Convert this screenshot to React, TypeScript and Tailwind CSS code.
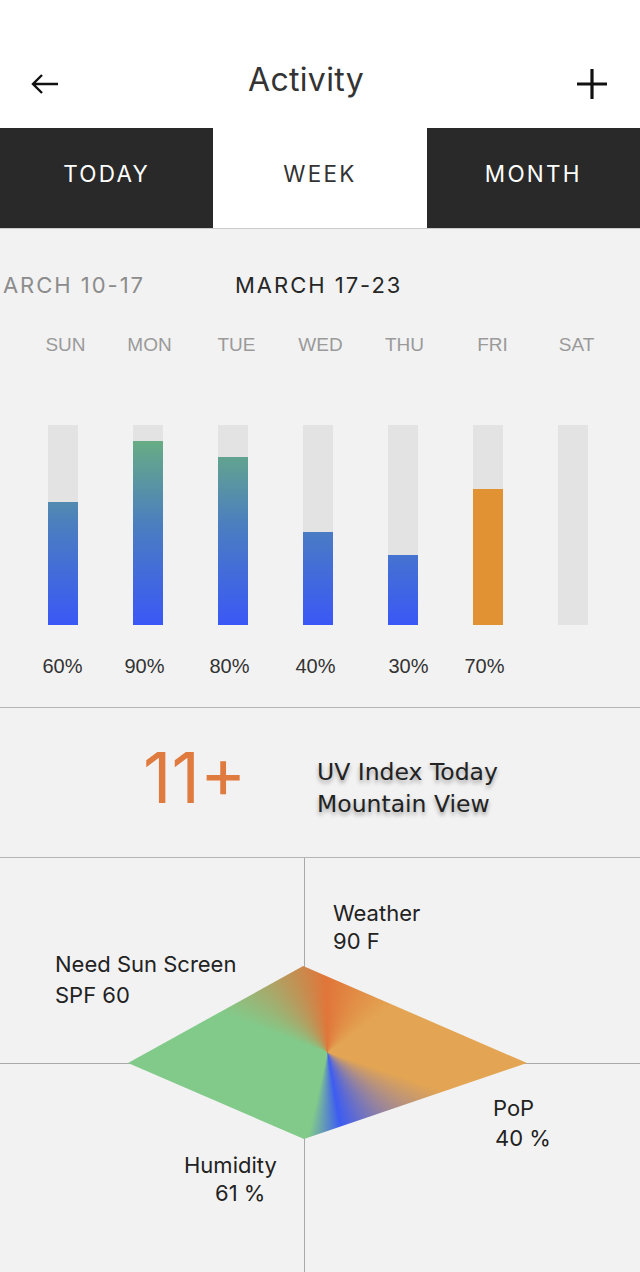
import React from "react";

const days = [
  { d: "SUN", fill: 123, pct: "60%", color: "grad", dl: "translate-x-[3px]", pl: "translate-x-[0px]" },
  { d: "MON", fill: 184, pct: "90%", color: "grad", dl: "translate-x-[2px]", pl: "-translate-x-[3px]" },
  { d: "TUE", fill: 168, pct: "80%", color: "grad", dl: "translate-x-[4px]", pl: "-translate-x-[3px]" },
  { d: "WED", fill: 93, pct: "40%", color: "grad", dl: "translate-x-[3px]", pl: "-translate-x-[2px]" },
  { d: "THU", fill: 70, pct: "30%", color: "grad", dl: "translate-x-[2px]", pl: "translate-x-[6px]" },
  { d: "FRI", fill: 136, pct: "70%", color: "orange", dl: "translate-x-[5px]", pl: "-translate-x-[3px]" },
  { d: "SAT", fill: 0, pct: "", color: "grad", dl: "translate-x-[4px]", pl: "translate-x-[0px]" },
];

function BackArrow() {
  return (
    <svg width="30" height="24" viewBox="0 0 30 24" fill="none">
      <path d="M28 12H3M12 3L3 12L12 21" stroke="#111" strokeWidth="2.4" strokeLinecap="butt" strokeLinejoin="miter" />
    </svg>
  );
}

function Plus() {
  return (
    <svg width="32" height="32" viewBox="0 0 32 32" fill="none">
      <path d="M16 1V31M1 16H31" stroke="#111" strokeWidth="3.2" />
    </svg>
  );
}

export default function App() {
  return (
    <div className="w-[640px] h-[1272px] overflow-hidden bg-[#f2f2f2] font-['Inter','Noto_Sans',sans-serif] text-[#222]">
      {/* Header */}
      <div className="h-[128px] bg-white pt-[56px]">
        <div className="flex h-[56px] items-center pl-[30px] pr-[32px]">
          <BackArrow />
          <div className="mb-[8px] flex-1 pr-[24px] text-center text-[32px] leading-none text-[#333] tracking-[0.01em]">
            Activity
          </div>
          <Plus />
        </div>
      </div>

      {/* Tabs */}
      <div className="grid h-[101px] grid-cols-3 border-b border-[#c9c9c9] text-[22.5px] tracking-[0.1em]">
        <div className="flex items-center justify-center bg-[#292929] pb-[8px] text-white">TODAY</div>
        <div className="flex items-center justify-center bg-white pb-[8px] text-[#333]">WEEK</div>
        <div className="flex items-center justify-center bg-[#292929] pb-[8px] text-white">MONTH</div>
      </div>

      {/* Week chart */}
      <div className="border-b border-[#b5b5b5] pt-[42px] pb-[29px]">
        <div className="flex h-[28px] items-center whitespace-nowrap text-[22px] tracking-[0.09em]">
          <div className="flex w-[145px] shrink-0 justify-end text-[#8c8c8c]">MARCH 10-17</div>
          <div className="ml-[90px] text-[#262626]">MARCH 17-23</div>
        </div>

        <div className="mt-[34px] grid h-[24px] grid-cols-[repeat(7,85px)] pl-[20px] font-['Liberation_Sans',Arial,sans-serif] text-[19px] leading-[24px] text-[#9a9a9a]">
          {days.map((x) => (
            <div key={x.d} className={`text-center ${x.dl}`}>
              {x.d}
            </div>
          ))}
        </div>

        <div className="mt-[68px] grid h-[200px] grid-cols-[repeat(7,85px)] pl-[20px]">
          {days.map((x) => (
            <div key={x.d} className="flex justify-center">
              <div className="flex h-[200px] w-[30px] flex-col justify-end bg-[#e3e3e3]">
                {x.fill > 0 &&
                  (x.color === "orange" ? (
                    <div className="w-full bg-[#e19233]" style={{ height: x.fill }} />
                  ) : (
                    <div
                      className="w-full bg-[linear-gradient(to_top,#3a58f6,#4b7ec0_50%,#6cb579)] bg-[length:100%_200px] bg-bottom bg-no-repeat"
                      style={{ height: x.fill }}
                    />
                  ))}
              </div>
            </div>
          ))}
        </div>

        <div className="mt-[29px] grid h-[24px] grid-cols-[repeat(7,85px)] pl-[20px] font-['Liberation_Sans',Arial,sans-serif] text-[20px] leading-[24px] text-[#333]">
          {days.map((x) => (
            <div key={x.d} className={`text-center ${x.pl}`}>
              {x.pct}
            </div>
          ))}
        </div>
      </div>

      {/* UV */}
      <div className="flex h-[150px] items-center border-b border-[#b5b5b5]">
        <div className="ml-[143px] mb-[10px] w-[174px] shrink-0 text-[70px] leading-none text-[#e07b40]">11+</div>
        <div className="mt-[10px] font-['DejaVu_Sans',Verdana,sans-serif] text-[23.5px] leading-[32px] text-[#222] [text-shadow:0_3px_4px_rgba(0,0,0,0.35)]">
          <div>UV Index Today</div>
          <div>Mountain View</div>
        </div>
      </div>

      {/* Radar */}
      <div className="relative h-[414px]">
        <div className="grid h-full grid-cols-[305px_1fr] grid-rows-[206px_1fr]">
          <div className="border-r border-b border-[#a9a9a9]" />
          <div className="border-b border-[#a9a9a9]" />
          <div className="border-r border-[#a9a9a9]" />
          <div />
        </div>

        <div className="absolute left-[128px] top-[108px] h-[173px] w-[399px] [clip-path:polygon(43.9%_0,100%_56.1%,44.1%_100%,0_56.1%)] [background-image:conic-gradient(from_0deg_at_50%_50%,#e0763a_0deg,#e3a553_55deg,#e3a553_108deg,#3d5cf2_170deg,#82ca8a_193deg,#82ca8a_290deg,#e0763a_358deg)]" />

        <div className="absolute left-[333px] top-[41px] text-[22px] leading-[28px]">
          <div>Weather</div>
          <div>90 F</div>
        </div>
        <div className="absolute left-[55px] top-[91px] text-[22px] leading-[31px]">
          <div>Need Sun Screen</div>
          <div>SPF 60</div>
        </div>
        <div className="absolute left-[493px] top-[235px] text-[22px] leading-[30px]">
          <div>PoP</div>
          <div className="ml-[2px]">40 %</div>
        </div>
        <div className="absolute left-[184px] top-[293px] text-[22px] leading-[28px]">
          <div>Humidity</div>
          <div className="ml-[31px]">61 %</div>
        </div>
      </div>
    </div>
  );
}
